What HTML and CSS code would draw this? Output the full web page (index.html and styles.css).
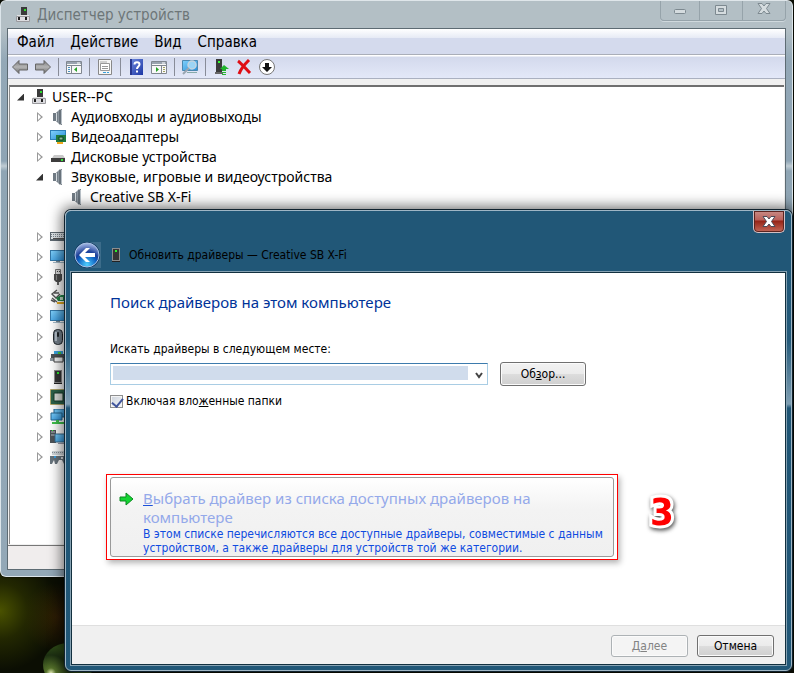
FILE: index.html
```html
<!DOCTYPE html>
<html lang="ru">
<head>
    <meta charset="UTF-8">
    <meta name="viewport" content="width=device-width, initial-scale=1.0">
    <title>Диспетчер устройств</title>
    <link rel="stylesheet" href="styles.css">
</head>

<body>
    <!-- набор иконок -->
    <svg class="sprite" width="0" height="0">
        <defs>
            <linearGradient id="gBlue" x1="0" y1="0" x2="1" y2="1"><stop offset="0" stop-color="#7fd0fb"/><stop offset="1" stop-color="#2b8fd8"/></linearGradient>
            <linearGradient id="gGray" x1="0" y1="0" x2="0" y2="1"><stop offset="0" stop-color="#777"/><stop offset=".5" stop-color="#b4b4b4"/><stop offset="1" stop-color="#6c6c6c"/></linearGradient>
            <linearGradient id="gHelp" x1="0" y1="0" x2="1" y2="1"><stop offset="0" stop-color="#6f8be0"/><stop offset="1" stop-color="#1c36a4"/></linearGradient>
            <linearGradient id="gSound" x1="0" y1="0" x2="1" y2="0"><stop offset="0" stop-color="#55606a"/><stop offset="1" stop-color="#aeb7bf"/></linearGradient>
            <radialGradient id="gBack" cx=".5" cy=".9" r=".9"><stop offset="0" stop-color="#4fd0ff"/><stop offset=".45" stop-color="#0d5fc0"/><stop offset=".6" stop-color="#1c3f98"/><stop offset="1" stop-color="#a9bce8"/></radialGradient>
        </defs>
        <symbol id="i-pc" viewBox="0 0 16 16">
            <path d="M6 0h6v8H6z" fill="#3a3a3a"/><path d="M9 2h2v2H9z" fill="#2be02b"/>
            <path d="M2 8h12v3H2z" fill="#e4e4e4"/><path d="M1.500 9.500h13v5h-13z" fill="#dcdce0" stroke="#9a9a9e"/>
            <path d="M3 10h2v3H3zM10 10h2v3h-2z" fill="#222"/>
        </symbol>
        <symbol id="i-sound" viewBox="0 0 16 16">
            <path d="M3 4h3v8H3z" fill="#707a83"/><path d="M6 4l4-4v16l-4-4z" fill="url(#gSound)"/>
            <path d="M9 1l3-1v16l-3-1z" fill="#68727b"/><path d="M6.500 4v8" stroke="#d6dce0"/><path d="M11.500 1v14" stroke="#b9c1c8"/>
        </symbol>
        <symbol id="i-video" viewBox="0 0 16 16">
            <path d="M0 1h16v10H0z" fill="#2e7fb8"/><path d="M1 2h14v8H1z" fill="url(#gBlue)"/>
            <path d="M6 6h10v7H6z" fill="#1f7a3f"/><path d="M9 8h4v3H9z" fill="#8fb59a" stroke="#0d4420"/><path d="M7 13h6v2H7z" fill="#f0a81c"/>
        </symbol>
        <symbol id="i-disk" viewBox="0 0 16 16">
            <path d="M4 6h9l2 3H2z" fill="#c9c9c9"/><path d="M1 9h14v4H1z" fill="#3d3d3d"/><path d="M11 10h2v2h-2z" fill="#37e03a"/>
        </symbol>
        <symbol id="i-keys" viewBox="0 0 16 16">
            <path d="M0 3h16v9H0z" fill="#5f6a72"/><path d="M1 4h15v6H1z" fill="#dfe5e9"/>
            <path d="M1 5.500h15M1 7.500h15" stroke="#7a858d" stroke-dasharray="1 1"/><path d="M3 9.500h13" stroke="#555"/>
        </symbol>
        <symbol id="i-monitor" viewBox="0 0 16 16">
            <path d="M0 1h18v11H0z" fill="#3478a8"/><path d="M1 2h16v9H1z" fill="url(#gBlue)"/>
            <path d="M6 12h4v1H6z" fill="#7a8a94"/><path d="M3 13h11v1H3z" fill="#a5bac8"/>
        </symbol>
        <symbol id="i-usb" viewBox="0 0 16 16">
            <path d="M5.500.5h5v5h-5z" fill="#ddd" stroke="#777"/><path d="M7 2h1v1H7zM9 2h1v1H9z" fill="#444"/>
            <path d="M4 5h8v6l-2 2H6l-2-2z" fill="#4d4d4d"/><path d="M6 6h1v5H6z" fill="#888"/><path d="M7 13h2v3H7z" fill="#666"/>
        </symbol>
        <symbol id="i-ctrl" viewBox="0 0 16 16">
            <path d="M7 1L2 5l4 4 4-4M4 4h5M2 9l5 4M1 11l4 2" fill="none" stroke="#555" stroke-width="1.400"/>
            <path d="M6 9l5-3h5v6H8z" fill="#22874a"/><path d="M10 8h3v3h-3z" fill="#c5dfcb"/><path d="M7 13h8v2H7z" fill="#e8ac20"/>
        </symbol>
        <symbol id="i-mouse" viewBox="0 0 16 16">
            <rect x="3.500" y=".5" width="9" height="15" rx="4" fill="#76828d" stroke="#22272c"/>
            <path d="M5 3h2v9H5z" fill="#b4bec8"/><rect x="7" y="3" width="2" height="5" rx="1" fill="#1f2428"/>
        </symbol>
        <symbol id="i-print" viewBox="0 0 16 16">
            <path d="M4 2h9v4H4z" fill="#3aa5e0"/><path d="M8 3h3v2H8z" fill="#40d040"/><path d="M1 5h14v5H1z" fill="#4c5257"/>
            <path d="M0 9h16v3H0z" fill="#8b949b"/><path d="M4 8h9v5H4z" fill="#f2f4f5" stroke="#444"/>
        </symbol>
        <symbol id="i-tower" viewBox="0 0 16 16">
            <path d="M4 1h8v13H4z" fill="#8d8d8d"/><path d="M5 2h6v11H5z" fill="#353535"/><path d="M7 3h2v2H7z" fill="#2df32d"/><path d="M4 14h8v1H4z" fill="#222"/>
        </symbol>
        <symbol id="i-chip" viewBox="0 0 16 16">
            <rect x=".5" y=".5" width="15" height="15" fill="#2b6148" stroke="#c99b33" stroke-dasharray="1 1"/>
            <path d="M4 4h9v8H4z" fill="#d7dcd6" stroke="#173c2a"/>
        </symbol>
        <symbol id="i-net" viewBox="0 0 16 16">
            <path d="M4 0h12v8H4z" fill="url(#gBlue)" stroke="#22648f"/><path d="M1 4h11v7H1z" fill="url(#gBlue)" stroke="#22648f"/>
            <path d="M6 11h3v2h5v2H2v-2h4z" fill="#3fc04c"/>
        </symbol>
        <symbol id="i-sys" viewBox="0 0 16 16">
            <path d="M0 1h6v13H0z" fill="#4d5358"/><path d="M1 3h4M1 6h4" stroke="#b8bec2"/><path d="M2 1h1v1H2z" fill="#3f3"/>
            <path d="M5 5h11v8H5z" fill="url(#gBlue)" stroke="#38688a"/><path d="M8 14h6v1H8z" fill="#99a"/>
        </symbol>
        <symbol id="i-game" viewBox="0 0 16 16">
            <path d="M2 2h14v4H2z" fill="#d3d9dd"/><path d="M2 3.500h14" stroke="#8a949b" stroke-dasharray="1 1"/>
            <path d="M0 7h16v8h-2l-2-4H9l-2 4H5l-1-4-2 4H0z" fill="#68747d"/><path d="M4 7h2v2H4z" fill="#3a9fe0"/><path d="M11 8h2v2h-2z" fill="#dfe4e8"/>
        </symbol>
        <symbol id="i-arrow" viewBox="0 0 16 16">
            <path d="M.5 8L7 1.500v3.500h8.500v6H7v3.500z" fill="url(#gGray)" stroke="#666"/>
        </symbol>
        <symbol id="i-pane" viewBox="0 0 16 16">
            <path d="M.5 2.500h15v12H.5z" fill="#f8f8f8" stroke="#808790"/><path d="M1 3h14v2H1z" fill="#9aa4b0"/>
            <path d="M11 4h3" stroke="#fff"/><path d="M1 6.500h14" stroke="#808790"/><path d="M5.500 7v7" stroke="#808790"/><path d="M2 8.500h2M2 10.500h2M2 12.500h2" stroke="#4a90c0"/><path d="M11 8v5L8 10.500z" fill="#27a327"/>
        </symbol>
        <symbol id="i-pane2" viewBox="0 0 16 16">
            <path d="M.5 2.500h15v12H.5z" fill="#f8f8f8" stroke="#808790"/><path d="M1 3h14v2H1z" fill="#9aa4b0"/>
            <path d="M11 4h3" stroke="#fff"/><path d="M1 6.500h14" stroke="#808790"/><path d="M10.500 7v7" stroke="#808790"/><path d="M12 8.500h2M12 10.500h2M12 12.500h2" stroke="#a0a060"/><path d="M5 8v5l3-2.500z" fill="#27a327"/>
        </symbol>
        <symbol id="i-props" viewBox="0 0 16 16">
            <path d="M1.500.5h12l1 1v14h-13z" fill="#f6f6f6" stroke="#888"/><path d="M3.500 4.500h9v7h-9z" fill="#fff" stroke="#999"/>
            <path d="M3 3h7" stroke="#aaa"/><path d="M5 7.500h6M5 9.500h6" stroke="#999"/><path d="M6 13.500h3M10 13.500h2" stroke="#39a0dc"/>
        </symbol>
        <symbol id="i-help" viewBox="0 0 16 16">
            <path d="M2 0h13v16H2z" fill="url(#gHelp)"/><path d="M2 0h2v16H2z" fill="#27378f"/>
            <path d="M6.500 5.500c0-3 5-3 5 0 0 2-2.500 2-2.500 4.500M9 11.500v2" fill="none" stroke="#fff" stroke-width="2"/>
        </symbol>
        <symbol id="i-scan" viewBox="0 0 16 16">
            <path d="M.5 1.500h15v10H.5z" fill="url(#gBlue)" stroke="#4b88b0"/><path d="M5 13h10v1H5z" fill="#8aa"/>
            <circle cx="10" cy="6" r="4" fill="#9bd4f5" stroke="#c4d4e0" stroke-width="1.500"/><path d="M7 9l-6 6" stroke="#9aa6b0" stroke-width="2"/>
        </symbol>
        <symbol id="i-update" viewBox="0 0 16 16">
            <path d="M3 0h6v13H3z" fill="#3b3b3b"/><path d="M5 2h2v2H5z" fill="#3f3"/><path d="M2 13h8v2H2z" fill="#666"/>
            <path d="M11 6l5 4h-3v2H9v-2H7z" fill="#21b52e"/><path d="M9 13h4v1H9zM9 15h4v1H9z" fill="#21b52e"/>
        </symbol>
        <symbol id="i-del" viewBox="0 0 16 16">
            <path d="M2 2c3 2 8 8 12 12M13 1C9 5 5 9 3 15" fill="none" stroke="#df0d14" stroke-width="3"/>
        </symbol>
        <symbol id="i-down" viewBox="0 0 16 16">
            <circle cx="8" cy="8" r="7.500" fill="#fff" stroke="#777"/><path d="M6 4h4v4h3l-5 5-5-5h3z" fill="#111"/>
        </symbol>
        <symbol id="i-x" viewBox="0 0 14 12">
            <path d="M1 .5h4l2 2.500 2-2.500h4L9.500 5.500l3.500 5H9L7 8l-2 2.500H1l3.500-5z"/>
        </symbol>
    </svg>

    <div class="desktop">
        <div class="droplet"></div>

        <!-- диспетчер устройств -->
        <section class="window manager">
            <header class="manager-title">
                <svg class="icon"><use href="#i-pc"/></svg>
                <h1>Диспетчер устройств</h1>
                <div class="caption-buttons">
                    <button type="button" aria-label="Свернуть"><svg width="12" height="6"><rect x=".5" y=".5" width="11" height="4" rx="1"/></svg></button>
                    <button type="button" aria-label="Развернуть"><svg width="12" height="10"><path d="M.5.5h11v9H.5zM3.500 3.500v3h5v-3z" fill-rule="evenodd"/></svg></button>
                    <button type="button" aria-label="Закрыть"><svg width="14" height="12"><use href="#i-x"/></svg></button>
                </div>
            </header>

            <div class="manager-body">
                <nav class="menu">
                    <a href="#">Файл</a>
                    <a href="#">Действие</a>
                    <a href="#">Вид</a>
                    <a href="#">Справка</a>
                </nav>

                <div class="toolbar">
                    <button type="button" aria-label="Назад"><svg class="icon"><use href="#i-arrow"/></svg></button>
                    <button type="button" aria-label="Вперёд"><svg class="icon flip"><use href="#i-arrow"/></svg></button>
                    <span class="sep"></span>
                    <button type="button" aria-label="Дерево консоли"><svg class="icon"><use href="#i-pane"/></svg></button>
                    <span class="sep"></span>
                    <button type="button" aria-label="Свойства"><svg class="icon"><use href="#i-props"/></svg></button>
                    <span class="sep"></span>
                    <button type="button" aria-label="Справка"><svg class="icon"><use href="#i-help"/></svg></button>
                    <button type="button" aria-label="Область действий"><svg class="icon"><use href="#i-pane2"/></svg></button>
                    <span class="sep"></span>
                    <button type="button" aria-label="Обновить конфигурацию"><svg class="icon"><use href="#i-scan"/></svg></button>
                    <span class="sep"></span>
                    <button type="button" aria-label="Обновить драйверы"><svg class="icon"><use href="#i-update"/></svg></button>
                    <button type="button" aria-label="Удалить"><svg class="icon"><use href="#i-del"/></svg></button>
                    <button type="button" aria-label="Отключить"><svg class="icon"><use href="#i-down"/></svg></button>
                </div>

                <div class="tree">
                    <div class="node open"><i></i><svg class="icon"><use href="#i-pc"/></svg>USER--PC</div>
                    <ul>
                        <li><div class="node closed"><i></i><svg class="icon"><use href="#i-sound"/></svg>Аудиовходы и аудиовыходы</div></li>
                        <li><div class="node closed"><i></i><svg class="icon"><use href="#i-video"/></svg>Видеоадаптеры</div></li>
                        <li><div class="node closed"><i></i><svg class="icon"><use href="#i-disk"/></svg>Дисковые устройства</div></li>
                        <li>
                            <div class="node open"><i></i><svg class="icon"><use href="#i-sound"/></svg>Звуковые, игровые и видеоустройства</div>
                            <ul>
                                <li><div class="node"><i></i><svg class="icon"><use href="#i-sound"/></svg>Creative SB X-Fi</div></li>
                                <li><div class="node"><i></i><svg class="icon"><use href="#i-sound"/></svg></div></li>
                            </ul>
                        </li>
                        <li><div class="node closed"><i></i><svg class="icon"><use href="#i-keys"/></svg></div></li>
                        <li><div class="node closed"><i></i><svg class="icon"><use href="#i-monitor"/></svg></div></li>
                        <li><div class="node closed"><i></i><svg class="icon"><use href="#i-usb"/></svg></div></li>
                        <li><div class="node closed"><i></i><svg class="icon"><use href="#i-ctrl"/></svg></div></li>
                        <li><div class="node closed"><i></i><svg class="icon"><use href="#i-monitor"/></svg></div></li>
                        <li><div class="node closed"><i></i><svg class="icon"><use href="#i-mouse"/></svg></div></li>
                        <li><div class="node closed"><i></i><svg class="icon"><use href="#i-print"/></svg></div></li>
                        <li><div class="node closed"><i></i><svg class="icon"><use href="#i-tower"/></svg></div></li>
                        <li><div class="node closed"><i></i><svg class="icon"><use href="#i-chip"/></svg></div></li>
                        <li><div class="node closed"><i></i><svg class="icon"><use href="#i-net"/></svg></div></li>
                        <li><div class="node closed"><i></i><svg class="icon"><use href="#i-sys"/></svg></div></li>
                        <li><div class="node closed"><i></i><svg class="icon"><use href="#i-game"/></svg></div></li>
                    </ul>
                </div>
                <div class="status"></div>
            </div>
        </section>

        <!-- мастер обновления драйверов -->
        <section class="window wizard">
            <button type="button" class="wizard-close" aria-label="Закрыть"><svg width="14" height="12"><use href="#i-x"/></svg></button>
            <header class="wizard-title">
                <button type="button" class="back" aria-label="Назад">
                    <svg width="28" height="28" viewBox="0 0 28 28">
                        <path d="M14 1h13v26H14z" fill="#3c6c8a"/><circle cx="13" cy="14" r="13" fill="#173a66"/><circle cx="13" cy="14" r="12" fill="url(#gBack)" stroke="#a9c4e4"/>
                        <path d="M5 14l7-7h4l-5 5h10v4H11l5 5h-4z" fill="#fff"/>
                    </svg>
                </button>
                <svg class="icon"><use href="#i-tower"/></svg>
                <span>Обновить драйверы — Creative SB X-Fi</span>
            </header>

            <form class="wizard-body">
                <div class="wizard-content">
                    <h2>Поиск драйверов на этом компьютере</h2>

                    <label class="path-label" for="path">Искать драйверы в следующем месте:</label>
                    <div class="path-row">
                        <div class="combo">
                            <select id="path"><option></option></select>
                            <svg width="8" height="7"><path d="M1 1l3 4 3-4" fill="none" stroke="#444" stroke-width="2"/></svg>
                        </div>
                        <button type="button" class="btn browse">Об<u>з</u>ор...</button>
                    </div>
                    <div class="check-row">
                        <input type="checkbox" id="sub" checked>
                        <label for="sub">Включая вло<u>ж</u>енные папки</label>
                    </div>

                    <div class="choice-row">
                        <div class="highlight">
                            <button type="button" class="choice">
                                <svg width="16" height="16" viewBox="0 0 16 16"><path d="M1 6h6V2l7 6-7 6v-4H1z" fill="#14d433" stroke="#0b8a20"/></svg>
                                <span>
                                    <strong>Выбрать драйвер из списка доступных драйверов на компьютере</strong>
                                    <small>В этом списке перечисляются все доступные драйверы, совместимые с данным устройством, а также драйверы для устройств той же категории.</small>
                                </span>
                            </button>
                        </div>
                        <span class="step">3</span>
                    </div>
                </div>

                <footer class="wizard-footer">
                    <button type="button" class="btn" disabled>Д<u>а</u>лее</button>
                    <button type="button" class="btn">Отмена</button>
                </footer>
            </form>
        </section>
    </div>
</body>
</html>
```
FILE: styles.css
```css
* {
    box-sizing: border-box;
    margin: 0;
    padding: 0;
}
body {
    font-family: "DejaVu Sans Condensed", "Noto Sans", sans-serif;
    font-size: 12px;
    color: #000;
}
button {
    font: inherit;
    background: none;
    border: none;
}
ul {
    list-style: none;
}
.sprite {
    position: absolute;
}
.icon {
    width: 16px;
    height: 16px;
    flex: none;
}
.flip {
    transform: scaleX(-1);
}

/* рабочий стол */
.desktop {
    position: relative;
    min-height: 100vh;
    overflow: hidden;
    background:
        radial-gradient(circle at 0 calc(100% - 62px), #4a5200 0, rgba(50, 56, 0, .6) 28px, transparent 60px),
        radial-gradient(circle at 56px calc(100% - 56px), #2c1a04 0, transparent 34px),
        #0b0e03;
}
.droplet {
    position: absolute;
    left: 43px;
    bottom: -14px;
    width: 50px;
    height: 44px;
    border-radius: 50%;
    background: radial-gradient(circle at 8px 30px, #dfe8b0 0, #54702a 5px, #1d3012 18px, #2c4716 26px);
}

.window {
    position: absolute;
    display: flex;
    flex-direction: column;
}

/* диспетчер устройств */
.manager {
    left: 0;
    right: 1px;
    top: 0;
    bottom: 96px;
    padding: 0 6px 6px;
    background: linear-gradient(#b3bfc5 0, #b3bfc5 28px, #93a8b7 60px, #8ea4b4 160px, #c0ccd3 165px, #8fa5b4 170px, #93a8b7 100%);
    border: 1px solid #dce5ea;
    border-top-color: #dfe6ea;
    border-radius: 6px;
    box-shadow: 0 0 2px #000;
}
.manager-title {
    display: flex;
    align-items: center;
    gap: 6px;
    height: 27px;
    padding-left: 8px;
    color: #6d7678;
}
.manager-title h1 {
    flex: 1;
    font-size: 15px;
    font-weight: normal;
    line-height: 24px;
}
.caption-buttons {
    display: flex;
    align-self: flex-start;
    height: 20px;
    border: 1px solid #96a3aa;
    border-top: none;
    border-radius: 0 0 4px 4px;
    box-shadow: 0 1px 0 #d0d9dd;
}
.caption-buttons button {
    width: 43px;
    border-left: 1px solid #96a3aa;
}
.caption-buttons button:first-child {
    width: 38px;
    border-left: none;
}
.caption-buttons svg {
    fill: #d5dcdf;
    stroke: #7d8990;
}
.manager-body {
    flex: 1;
    display: flex;
    flex-direction: column;
    border: 1px solid #5d6b73;
    background: #f0f0f0;
}
.menu {
    display: flex;
    gap: 16px;
    height: 26px;
    padding-left: 9px;
    line-height: 27px;
    font-size: 15px;
    background: linear-gradient(#fff, #e6eaf5 9px, #d4daed 9px, #d4daed);
    border-bottom: 1px solid #aaaeb8;
}
.menu a {
    color: #000;
    text-decoration: none;
}
.toolbar {
    display: flex;
    align-items: center;
    height: 24px;
    padding-left: 4px;
    background: linear-gradient(#fff 1px, #d3d9ec 2px, #e3e8f8);
    border-bottom: 1px solid #aab0c0;
    gap: 7px;
}
.toolbar button,
.toolbar svg {
    display: block;
}
.sep {
    width: 1px;
    height: 18px;
    background: #888c98;
}
.tree {
    flex: 1;
    margin: 6px 1px 0;
    padding: 0 0 0 5px;
    background: #fff;
    border-top: 2px solid #6f6f6f;
    border-left: 1px solid #8a8a8a;
    font-family: "Noto Sans", sans-serif;
    font-size: 14px;
}
.tree ul {
    padding-left: 19px;
}
.node {
    display: flex;
    align-items: center;
    height: 20px;
    line-height: 18px;
    white-space: nowrap;
}
.node i {
    width: 16px;
    height: 10px;
}
.node .icon {
    margin-right: 5px;
}
.node.closed i {
    width: 6px;
    margin: 0 7px 0 3px;
    background: #999;
    clip-path: polygon(0 0, 100% 50%, 0 100%, 0 0, 1px 2px, 1px 8px, 4px 5px, 1px 2px);
}
.node.open i {
    width: 7px;
    height: 7px;
    margin: 0 7px 0 2px;
    background: #333;
    clip-path: polygon(100% 0, 100% 100%, 0 100%);
}
.status {
    height: 24px;
    margin-top: 1px;
    border-top: 1px solid #777;
    background: #f0eded;
}

/* мастер */
.wizard {
    left: 65px;
    right: 2px;
    top: 210px;
    bottom: 2px;
    padding: 0 5px 5px;
    background: linear-gradient(#215777 0, #215777 60px, #245a7a 130px, #7f9fb3 193px, #1f5575 197px, #215777 100%);
    border: 1px solid #9fb6c5;
    border-radius: 6px;
    box-shadow: 0 0 0 1px #10222e, 0 0 14px 3px rgba(0, 0, 0, .6);
}
.wizard-close {
    position: absolute;
    right: 6px;
    top: 0;
    width: 32px;
    height: 22px;
    border: 1px solid #d3c0c4;
    border-top: none;
    border-radius: 0 0 5px 5px;
    background: linear-gradient(#c88c87, #b9605a 9px, #952417 10px, #c4695a);
    box-shadow: inset 0 0 0 1px #5c2420;
}
.wizard-close svg {
    display: block;
    margin: 0 auto;
    fill: #fff;
    stroke: #4a4a58;
}
.wizard-title {
    display: flex;
    align-items: center;
    height: 61px;
    padding: 26px 0 0 3px;
}
.wizard-title svg {
    display: block;
}
.wizard-title .icon {
    margin: 0 5px 0 6px;
}
.wizard-body {
    flex: 1;
    display: flex;
    flex-direction: column;
    background: #fff;
    border: 1px solid #12303f;
    outline: 1px solid #86a2b3;
}
.wizard-content {
    flex: 1;
    padding: 17px 38px 0;
}
.wizard-content h2 {
    font-family: "Noto Sans", sans-serif;
    font-size: 15px;
    font-weight: normal;
    line-height: 24px;
    color: #003399;
}
.path-label {
    display: block;
    margin-top: 27px;
    line-height: 16px;
}
.path-row {
    display: flex;
    align-items: center;
    gap: 12px;
    margin-top: 5px;
}
.combo {
    position: relative;
    flex: 0 1 378px;
}
.combo select {
    display: block;
    width: 100%;
    height: 22px;
    appearance: none;
    border: 1px solid #a9cde4;
    border-top-color: #3d7bad;
    background: linear-gradient(#d0dcec, #d0dcec) 2px 2px / calc(100% - 21px) 14px no-repeat #fff;
}
.combo svg {
    position: absolute;
    right: 5px;
    top: 9px;
    pointer-events: none;
}
.btn {
    width: 77px;
    height: 22px;
    border: 1px solid #707070;
    border-radius: 3px;
    background: linear-gradient(#f2f2f2, #ebebeb 50%, #dddddd 50%, #cfcfcf);
    box-shadow: inset 0 0 0 1px #fbfbfb;
    line-height: 18px;
}
.btn:disabled {
    color: #838383;
    border-color: #adb2b5;
    background: #f4f4f4;
}
.browse {
    width: 86px;
    height: 24px;
}
.check-row {
    display: flex;
    align-items: center;
    gap: 3px;
    margin-top: 6px;
    line-height: 18px;
}
.check-row input {
    width: 13px;
    height: 13px;
    appearance: none;
    border: 1px solid #8e8f8f;
    background: linear-gradient(135deg, #cdd3dc, #f4f6f8);
    box-shadow: inset 0 0 0 1px #f4f4f4;
}
.check-row input:checked::after {
    content: "";
    display: block;
    width: 5px;
    height: 9px;
    margin-left: 3px;
    border: solid #40559c;
    border-width: 0 2px 2px 0;
    transform: rotate(40deg);
}
.choice-row {
    display: flex;
    align-items: center;
    gap: 32px;
    margin: 64px 0 0 -4px;
}
.highlight {
    flex: 0 1 512px;
    padding: 2px 3px;
    border: 1px solid #f00;
    box-shadow: 2px 3px 6px rgba(0, 0, 0, .3);
}
.choice {
    display: flex;
    gap: 8px;
    width: 100%;
    height: 80px;
    padding: 11px 0 0 8px;
    border: 1px solid #999;
    border-radius: 3px;
    background: linear-gradient(#fff, #f3f3f3 40%, #f0f0f0);
    text-align: left;
}
.choice svg {
    flex: none;
    margin-top: 2px;
}
.choice strong {
    display: block;
    font-family: "Noto Sans", sans-serif;
    font-size: 15px;
    font-weight: normal;
    line-height: 19px;
    color: #94a9ea;
}
.choice strong::first-letter {
    text-decoration: underline #1d50d8;
}
.choice small {
    display: block;
    font-size: 12px;
    line-height: 14px;
    color: #0f4be0;
}
.step {
    padding-bottom: 10px;
    font: bold 38px "DejaVu Sans Condensed", sans-serif;
    color: #f00;
    -webkit-text-stroke: 6px #fff;
    paint-order: stroke fill;
    filter: drop-shadow(1px 2px 2px rgba(0, 0, 0, .7));
}
.wizard-footer {
    display: flex;
    justify-content: flex-end;
    gap: 9px;
    padding: 9px 11px 7px;
    background: #f0f0f0;
    border-top: 1px solid #dfdfdf;
}
```
